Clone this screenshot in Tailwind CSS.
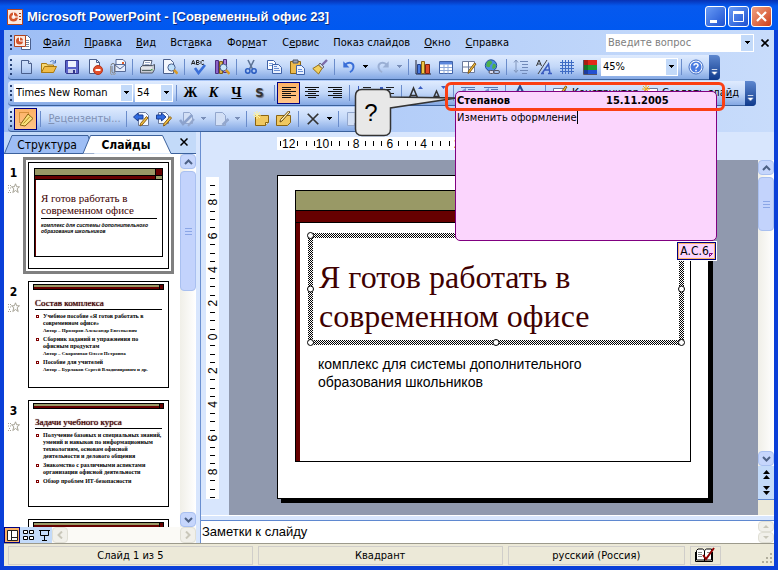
<!DOCTYPE html>
<html lang="ru">
<head>
<meta charset="utf-8">
<title>Microsoft PowerPoint - [Современный офис 23]</title>
<script src="https://cdn.jsdelivr.net/npm/@tailwindcss/browser@4"></script>
</head>
<body class="h-screen overflow-hidden bg-[#d8e6fd] font-['DejaVu_Sans_Condensed','Liberation_Sans',sans-serif] text-[11px] leading-4 text-black">

<svg class="hidden" aria-hidden="true">
  <defs>
    <linearGradient id="gPage" x1="0" y1="0" x2="1" y2="1"><stop offset=".3" stop-color="#fff"/><stop offset="1" stop-color="#c3cfe6"/></linearGradient>
    <linearGradient id="gGold" x1="0" y1="0" x2="1" y2="1"><stop offset="0" stop-color="#fff0a8"/><stop offset="1" stop-color="#dc9a1c"/></linearGradient>
    <symbol id="page" viewBox="0 0 16 16"><path d="M3.500 1.500h7l3 3v10h-10z" fill="url(#gPage)" stroke="#4a5f8c"/><path d="M10.500 1.500v3h3" fill="#dfe8f8" stroke="#4a5f8c"/></symbol>
    <symbol id="open" viewBox="0 0 16 16"><path d="M.5 13.500v-9h5l1 1.500h6v2" fill="#f6d875" stroke="#a9780f"/><path d="M.5 13.500l3-6h12l-3 6z" fill="#f0bc48" stroke="#a9780f"/><path d="M9 3c2-2 4-1.500 5 .500M14.500 1v3h-3" fill="none" stroke="#4a73b8"/></symbol>
    <symbol id="save" viewBox="0 0 16 16"><path d="M1.500 1.500h13v13h-12l-1-1z" fill="#5a62c8" stroke="#32368c"/><path d="M4 2h8v6H4z" fill="#eef2fd"/><path d="M4 10h8v4H4z" fill="#c8cdea"/><path d="M9 11h2v3H9z" fill="#32368c"/></symbol>
    <symbol id="perm" viewBox="0 0 16 16"><path d="M2.500.500h7l3 3v11h-10z" fill="#f4f7fd" stroke="#4a5f8c"/><path d="M9.500.500v3h3" fill="none" stroke="#4a5f8c"/><circle cx="11" cy="11" r="4.500" fill="#e2502c" stroke="#b5331a"/><path d="M8.500 10h5v2h-5z" fill="#fff"/></symbol>
    <symbol id="mail" viewBox="0 0 16 16"><path d="M6 .500h7l2.500 2.500v8H6z" fill="#f4f8ff" stroke="#566a96"/><path d="M4.500 5.500h11v7h-11z" fill="#e6edfb" stroke="#566a96"/><path d="M5 6l5 4 5-4" fill="none" stroke="#566a96"/><path d="M12 3h2v2h-2z" fill="#e2602c"/><path d="M1 6.500a2 2 0 0 1 4 0v6a1.500 1.500 0 0 1-3 0V7" fill="none" stroke="#777"/><path d="M.500 7v6a2.500 2.500 0 0 0 5 1" fill="none" stroke="#999"/></symbol>
    <symbol id="print" viewBox="0 0 16 16"><path d="M5 1.500h8l-1.500 6h-8z" fill="#fff" stroke="#56607a"/><path d="M6 3.500h5M5.500 5.500h5" stroke="#9aa8c6"/><path d="M1.500 8.500l2-2h10l2-1v5l-2 3.500h-12z" fill="#c9ccd4" stroke="#4c5464"/><path d="M2 9h11" stroke="#fff"/><path d="M3 11.500h9" stroke="#566"/><path d="M12 10h1.500v1.500H12z" fill="#50b050"/></symbol>
    <symbol id="preview" viewBox="0 0 16 16"><path d="M1.500.500h7l3 3v11h-10z" fill="#f4f7fd" stroke="#4a5f8c"/><circle cx="9.500" cy="8.500" r="3.600" fill="#bfe0fb" stroke="#4a5f8c"/><path d="M12 11l3.500 3.700" stroke="#d89a28" stroke-width="2.600"/></symbol>
    <symbol id="spell" viewBox="0 0 16 16"><path d="M.500 5.500l1.500-4h.5l1.500 4M1 4.500h2.500M5.500 5.500v-4h2l.5 1-.5 1h-2 2l.8 1-.8 1zM13 2l-1-.500h-1l-1 1v2l1 1h1l1-.500" fill="none" stroke="#222"/><path d="M4 9l3.500 5L14 6" fill="none" stroke="#3a6fd8" stroke-width="2.600"/></symbol>
    <symbol id="books" viewBox="0 0 16 16"><path d="M1.500 1.500h3v13h-3z" fill="#8f62c8" stroke="#4b3080"/><path d="M5.500 2.500h3v12h-3z" fill="#d8b050" stroke="#806018"/><path d="M9.500.500h3v13h-3z" fill="#a882dc" stroke="#4b3080"/><circle cx="9.500" cy="8.500" r="3.400" fill="#c8e6fc" stroke="#4a5f8c"/><path d="M12 11l3.500 4" stroke="#d89a28" stroke-width="2.600"/></symbol>
    <symbol id="cut" viewBox="0 0 16 16"><path d="M5 1l4.500 9M11 1L6.500 10" stroke="#5d7396" stroke-width="1.600"/><circle cx="4.800" cy="12" r="2.200" fill="none" stroke="#2a5cc0" stroke-width="1.500"/><circle cx="11" cy="12" r="2.200" fill="none" stroke="#2a5cc0" stroke-width="1.500"/></symbol>
    <symbol id="copy" viewBox="0 0 16 16"><path d="M1.500 1.500h6l2 2v7h-8z" fill="#fff" stroke="#3f62a8"/><path d="M3 4.500h4M3 6.500h4" stroke="#7fa0dc"/><path d="M6.500 5.500h6l3 3v6h-9z" fill="#eaf1fe" stroke="#3f62a8"/><path d="M8 9.500h5M8 11.500h6M8 7.500h3" stroke="#6a8fd4"/></symbol>
    <symbol id="paste" viewBox="0 0 16 16"><path d="M1.500 2.500h10v12h-10z" fill="#eebb4c" stroke="#8a6412"/><path d="M4 1h5v3H4z" fill="#9aa2b4" stroke="#4c5464"/><path d="M7.500 6.500h5l3 3v6h-8z" fill="#eaf1fe" stroke="#3f62a8"/><path d="M9 10.500h4M9 12.500h5" stroke="#6a8fd4"/></symbol>
    <symbol id="brush" viewBox="0 0 16 16"><path d="M15 1l-5 5" stroke="#7c6ca8" stroke-width="2.400"/><path d="M8 4l4 4-2 1.500L6.500 6z" fill="#d0d4e0" stroke="#667"/><path d="M6.500 6L.800 9.500l5.700 5.500 3.500-5.500z" fill="#f2d060" stroke="#967014"/></symbol>
    <symbol id="undo" viewBox="0 0 16 16"><path d="M4 5c5-4 10-1 9 4-.500 2.500-2 4-4 5" fill="none" stroke="#3a6fd8" stroke-width="2.200"/><path d="M1.500 1.500v7h7z" fill="#3a6fd8"/></symbol>
    <symbol id="redo" viewBox="0 0 16 16"><path d="M12 5c-5-4-10-1-9 4 .500 2.500 2 4 4 5" fill="none" stroke="#9aafd4" stroke-width="2.200"/><path d="M14.500 1.500v7h-7z" fill="#9aafd4"/></symbol>
    <symbol id="chart" viewBox="0 0 16 16"><path d="M1 1v14h15" fill="none" stroke="#223"/><path d="M2.500 5.500h3v9h-3z" fill="#4a7be0" stroke="#223f88"/><path d="M6.500 2.500h3v12h-3z" fill="#f0c848" stroke="#8a6412"/><path d="M10.500 5.500h4v9h-4z" fill="#e04c28" stroke="#802010"/></symbol>
    <symbol id="table" viewBox="0 0 16 16"><path d="M1.500 2.500h13v12h-13z" fill="#fff" stroke="#3f62a8"/><path d="M2 3h12v2.500H2z" fill="#5a86dc"/><path d="M2 8.500h12M2 11.500h12M6 5.500v9M10 5.500v9" stroke="#8fa9d8"/></symbol>
    <symbol id="tborder" viewBox="0 0 16 16"><path d="M1.500 2.500h12v11h-12z" fill="#fff" stroke="#6b7a9c"/><path d="M2 8h12M7.500 3v10" stroke="#6b7a9c"/><path d="M15 5l-6 8-2 1.500.500-2.500 6-8z" fill="#f0c040" stroke="#8a5c12"/></symbol>
    <symbol id="globe" viewBox="0 0 16 16"><circle cx="7" cy="6.500" r="5.700" fill="#4a8ce4" stroke="#22509c"/><path d="M3 3c2-2 4-2 5 0s-2 2-2 4-3 1-4 0zM9 5c2-1 3 1 3 2s-2 3-3 3-1-3 0-5z" fill="#4cb04c"/><rect x="5" y="11.500" width="5" height="3" rx="1.500" fill="#dde" stroke="#556"/><rect x="9.500" y="11.500" width="6" height="3" rx="1.500" fill="none" stroke="#556"/></symbol>
    <symbol id="expand" viewBox="0 0 16 16"><path d="M3 1v12M1 3.500L3 1l2 2.500M1 11l2 2.500L5 11" fill="none" stroke="#8095bb"/><path d="M7 2.500h8M9 5.500h6M9 8.500h6M7 11.500h8M9 14.500h5" stroke="#7089b8"/></symbol>
    <symbol id="aa" viewBox="0 0 16 16"><path d="M.500 7L3 1l2.500 6M1.500 5h3" fill="none" stroke="#333"/><path d="M11 1L2 15" stroke="#444"/><path d="M6 14.500L12.500 5l1.500 9.500M8.500 11h5M5 14.500h3M12 14.500h4" fill="none" stroke="#3a5cc0" stroke-width="1.500"/></symbol>
    <symbol id="grid" viewBox="0 0 16 16"><path d="M1 3.500h14M1 6.500h14M1 9.500h14M1 12.500h14M3.500 1v14M6.500 1v14M9.500 1v14M12.500 1v14" stroke="#3f6cc4"/></symbol>
    <symbol id="color" viewBox="0 0 16 16"><path d="M2 1h13v5H2z" fill="#e02818"/><path d="M2 6h13v5H2z" fill="#1c9c30"/><path d="M2 11h13v4H2z" fill="#2450d0"/><path d="M1.500 1v14.500H15" fill="none" stroke="#556"/><path d="M2 1h4v14H2z" fill="#000" opacity=".25"/></symbol>
    <symbol id="help" viewBox="0 0 16 16"><circle cx="8" cy="8" r="7" fill="#fff" stroke="#3f6cc4"/><circle cx="8" cy="8" r="5.500" fill="#4a7be0"/><path d="M6 6.500c0-2.500 4-2.500 4 0 0 1.500-2 1.500-2 3M8 10.700v1.500" fill="none" stroke="#fff" stroke-width="1.500"/></symbol>
    <symbol id="al" viewBox="0 0 16 16"><path d="M1 2.500h14M1 4.500h9M1 6.500h14M1 8.500h9M1 10.500h14M1 12.500h9" stroke="#111"/></symbol>
    <symbol id="ac" viewBox="0 0 16 16"><path d="M1 2.500h14M4 4.500h8M1 6.500h14M4 8.500h8M1 10.500h14M4 12.500h8" stroke="#111"/></symbol>
    <symbol id="ar" viewBox="0 0 16 16"><path d="M1 2.500h14M6 4.500h9M1 6.500h14M6 8.500h9M1 10.500h14M6 12.500h9" stroke="#111"/></symbol>
    <symbol id="nums" viewBox="0 0 16 16"><path d="M2.500 1v4M2 7.500h2v2H2v2h2" fill="none" stroke="#3a5cc0"/><path d="M7 2.500h8M7 4.500h5M7 8.500h8M7 10.500h5" stroke="#222"/></symbol>
    <symbol id="bul" viewBox="0 0 16 16"><path d="M1 2h3v3H1zM1 8h3v3H1z" fill="#3a5cc0"/><path d="M7 2.500h8M7 4.500h5M7 8.500h8M7 10.500h5" stroke="#222"/></symbol>
    <symbol id="aup" viewBox="0 0 16 16"><path d="M1 14L5.500 3 10 14M3 10.500h5M0 14.500h3.500M7 14.500h5" fill="none" stroke="#333" stroke-width="1.600"/><path d="M10 4l2.500-3L15 4z" fill="#3a5cc0"/></symbol>
    <symbol id="adn" viewBox="0 0 16 16"><path d="M2 14L5.500 6 9 14M3.500 11.500h4M1 14.500h3M7 14.500h4" fill="none" stroke="#333" stroke-width="1.500"/><path d="M10 1l2.500 3L15 1z" fill="#3a5cc0"/></symbol>
    <symbol id="ind" viewBox="0 0 16 16"><path d="M1 2.500h14M8 4.500h7M8 6.500h7M8 8.500h7M1 10.500h14" stroke="#5a77b0"/><path d="M6 3v5L2 5.500z" fill="#7a97d0"/></symbol>
    <symbol id="acol" viewBox="0 0 16 16"><path d="M3 11L8 1l5 10M5 7.500h6" fill="none" stroke="#2c4c90" stroke-width="2"/><path d="M1 13h14v3H1z" fill="#600"/></symbol>
    <symbol id="design" viewBox="0 0 16 16"><path d="M1.500 3.500h12v9h-12z" fill="#fff" stroke="#6b7a9c"/><path d="M15 2l-5 7-2 1 .500-2 5-7z" fill="#f0c040" stroke="#8a5c12"/></symbol>
    <symbol id="nslide" viewBox="0 0 16 16"><path d="M3.500 3.500h12v9h-12z" fill="#fff" stroke="#6b7a9c"/><path d="M4 0v8M0 4h8M1 1l6 6M7 1L1 7" stroke="#f0b020"/></symbol>
    <symbol id="pencil" viewBox="0 0 16 16"><path d="M1.500 1.500h9v10h-9z" fill="none" stroke="#b06a10" stroke-dasharray="1 1"/><path d="M10 3l5 4.500L7 15l-5-1z" fill="#f9e07a" stroke="#8a6412"/><path d="M12 5.500l-6.500 7" stroke="#b98a1c"/></symbol>
    <symbol id="prevc" viewBox="0 0 16 16"><path d="M5.500 1.500h7l3 3v10h-10z" fill="#f4f8ff" stroke="#6b7a9c"/><path d="M.500 6L5 2v2h5v4H5v2z" fill="#2f6ae0" stroke="#1c3f94"/><path d="M15 7l-6 7-2 1 .500-2.500 6-7z" fill="#f0c040" stroke="#8a5c12"/></symbol>
    <symbol id="nextc" viewBox="0 0 16 16"><path d="M2.500 1.500h7l3 3v8h-10z" fill="#f4f8ff" stroke="#6b7a9c"/><path d="M10 6L5.500 2v2H.500v4h5v2z" fill="#2f6ae0" stroke="#1c3f94"/><path d="M15.500 7l-6 7-2 1 .500-2.500 6-7z" fill="#f0c040" stroke="#8a5c12"/></symbol>
    <symbol id="okc" viewBox="0 0 16 16"><path d="M4.500 1.500h6l3 3v8h-9z" fill="#d2dff5" stroke="#93a7cd"/><path d="M1 9l3 4 9-9" fill="none" stroke="#8ca2cc" stroke-width="2.500"/><path d="M15 8l-6 7" stroke="#93a7cd" stroke-width="2"/></symbol>
    <symbol id="noc" viewBox="0 0 16 16"><path d="M2.500 1.500h7l3 3v10h-10z" fill="#d2dff5" stroke="#93a7cd"/><path d="M15.500 8l-6 6" stroke="#93a7cd" stroke-width="2.500"/></symbol>
    <symbol id="newc" viewBox="0 0 16 16"><path d="M2.500 4.500h13v7l-3 3h-10z" fill="#f0c860" stroke="#8a6412"/><path d="M12.500 14.500v-3h3" fill="#fff3c0" stroke="#8a6412"/><path d="M4 0v8M0 4h8M1 1l6 6M7 1L1 7" stroke="#fff3a0"/></symbol>
    <symbol id="editc" viewBox="0 0 16 16"><path d="M.500 4.500h14v7l-3 3h-11z" fill="#f0c860" stroke="#8a6412"/><path d="M14 1L6 10l-2 1 .500-2.500 8-8.500z" fill="#fff0b0" stroke="#6b4a10"/></symbol>
    <symbol id="del" viewBox="0 0 16 16"><path d="M2 2l12 12M14 2L2 14" stroke="#333" stroke-width="2"/></symbol>
    <symbol id="dd" viewBox="0 0 7 4"><path d="M1 0h5v1H1zM2 1h3v1H2zM3 2h1v1H3z" fill="currentColor"/></symbol>
    <symbol id="ppt" viewBox="0 0 16 16"><path d="M.500.500h15v15H.500z" fill="#fbe9e0" stroke="#b5431c"/><circle cx="6.500" cy="8" r="4.500" fill="#d2552c"/><circle cx="6.500" cy="8" r="2" fill="#fbe9e0"/><path d="M6.500 8V3.500M6.500 8h4.500" stroke="#fff"/><path d="M12 4.500h2M12 7.500h2M12 10.500h2" stroke="#a03818"/></symbol>
    <symbol id="up" viewBox="0 0 9 6"><path d="M1 5l3.500-3.500L8 5" fill="none" stroke="currentColor" stroke-width="2"/></symbol>
    <symbol id="dn" viewBox="0 0 9 6"><path d="M1 1l3.500 3.500L8 1" fill="none" stroke="currentColor" stroke-width="2"/></symbol>
    <symbol id="star" viewBox="0 0 12 11"><path d="M7.500.800l1.200 3h2.800L9.200 5.800l1 3.700-2.700-2-2.700 2 1-3.700L3.500 3.800h2.800z" fill="none" stroke="#a5a294"/><path d="M0 2.500h4M0 5h4M1 7.500h2M0 9.500h3" stroke="#a5a294" stroke-dasharray="1 1"/></symbol>
    <symbol id="cap" viewBox="0 0 12 25"><path d="M3 14h6v1H3zM3 17h6v1H3zM4 18h4v1H4zM5 19h2v1H5z" fill="#fff"/></symbol>
  </defs>
</svg>

<div class="relative flex h-full flex-col border-x-4 border-b-4 border-[#0a3fd8]">

  <!-- Title bar -->
  <header class="-mx-1 flex h-[30px] shrink-0 items-center gap-1 bg-linear-to-b from-[#0831b4] via-[#0659ee] via-20% to-[#0058f0] pt-[3px] pr-1.5 pl-[7px]">
    <svg class="size-4"><use href="#ppt"/></svg>
    <h1 class="flex-1 truncate font-['Liberation_Sans',sans-serif] text-[13px] font-bold text-white [text-shadow:1px_1px_0_#0a2a80]">Microsoft PowerPoint - [Современный офис 23]</h1>
    <div class="flex gap-0.5">
      <button aria-label="Свернуть" class="size-[21px] rounded-[3px] border border-white bg-linear-to-br from-[#6a9bf5] to-[#1d4fd0]"><svg viewBox="0 0 19 19"><path d="M4 13h7v3H4z" fill="#fff"/></svg></button>
      <button aria-label="Развернуть" class="size-[21px] rounded-[3px] border border-white bg-linear-to-br from-[#6a9bf5] to-[#1d4fd0]"><svg viewBox="0 0 19 19"><path d="M4.500 5v9.500h10V5" fill="none" stroke="#fff"/><path d="M4 4h11v3H4z" fill="#fff"/></svg></button>
      <button aria-label="Закрыть" class="size-[21px] rounded-[3px] border border-white bg-linear-to-br from-[#f0a080] to-[#cc3c14]"><svg viewBox="0 0 19 19"><path d="M5 5l9 9M14 5l-9 9" stroke="#fff" stroke-width="2.200"/></svg></button>
    </div>
  </header>

  <!-- Menu and toolbars -->
  <div class="shrink-0 bg-linear-to-r from-[#9ebef5] to-[#c8dcfb]">
    <nav class="flex h-[25px] items-center pl-1.5">
      <span class="flex h-4 w-0.5 flex-col justify-between"><i class="size-0.5 bg-[#274176]"></i><i class="size-0.5 bg-[#274176]"></i><i class="size-0.5 bg-[#274176]"></i><i class="size-0.5 bg-[#274176]"></i></span>
      <svg class="ml-0.5 h-[17px] w-[18px]" viewBox="0 0 18 17"><path d="M7.500 1.500h6l3 3v11h-9z" fill="#fff" stroke="#4a5f8c"/><path d="M12 6.500h3M12 8.500h3M12 10.500h3M12 12.500h3" stroke="#789"/><path d="M.500 1.500h11v11H.500z" fill="#fbe9e0" stroke="#b5431c"/><circle cx="5.500" cy="7" r="3.500" fill="#d2552c"/><path d="M5.500 7V3M5.500 7h4" stroke="#fff"/></svg>
      <div class="ml-1 flex whitespace-nowrap">
        <button class="px-[7px]"><u>Ф</u>айл</button>
        <button class="px-[7px]"><u>П</u>равка</button>
        <button class="px-[7px]"><u>В</u>ид</button>
        <button class="px-[7px]">Вст<u>а</u>вка</button>
        <button class="px-2">Фор<u>м</u>ат</button>
        <button class="px-[7px]">С<u>е</u>рвис</button>
        <button class="px-[7px]">Показ слай<u>д</u>ов</button>
        <button class="px-[7px]"><u>О</u>кно</button>
        <button class="px-2"><u>С</u>правка</button>
      </div>
      <div class="ml-auto flex h-[18px] w-[148px] items-center bg-white">
        <input aria-label="Вопрос" placeholder="Введите вопрос" class="min-w-0 flex-1 pl-0.5 placeholder:text-[#808080]">
        <button aria-label="Список вопросов" class="m-px flex w-3 items-center justify-center self-stretch bg-[#c3daf9]"><svg class="h-1 w-[7px]"><use href="#dd"/></svg></button>
      </div>
      <button aria-label="Закрыть окно" class="mr-1 ml-1.5 p-px"><svg class="size-2" viewBox="0 0 8 8"><path d="M.500.500l7 7M7.500.500l-7 7" stroke="#000" stroke-width="1.600"/></svg></button>
    </nav>

    <div class="flex h-[26px] pl-1" role="toolbar" aria-label="Стандартная">
      <div class="flex h-[25px] items-center rounded-sm border-b border-[#3b619c] bg-linear-to-b from-[#dfebfe] via-[#c2d7f8] to-[#84a8e4]">
        <span class="mx-[2px] flex h-4 w-0.5 flex-col justify-between"><i class="size-0.5 bg-[#274176]"></i><i class="size-0.5 bg-[#274176]"></i><i class="size-0.5 bg-[#274176]"></i><i class="size-0.5 bg-[#274176]"></i></span>
        <button aria-label="Создать" class="flex w-[23px] justify-center"><svg class="size-4"><use href="#page"/></svg></button>
        <button aria-label="Открыть" class="flex w-[23px] justify-center"><svg class="size-4"><use href="#open"/></svg></button>
        <button aria-label="Сохранить" class="flex w-[23px] justify-center"><svg class="size-4"><use href="#save"/></svg></button>
        <button aria-label="Разрешения" class="flex w-[23px] justify-center"><svg class="size-4"><use href="#perm"/></svg></button>
        <button aria-label="Сообщение" class="flex w-[23px] justify-center"><svg class="size-4"><use href="#mail"/></svg></button>
        <i class="mr-0.5 ml-[3px] h-4 w-px bg-[#6a8ccb]"></i>
        <button aria-label="Печать" class="flex w-[23px] justify-center"><svg class="size-4"><use href="#print"/></svg></button>
        <button aria-label="Просмотр" class="flex w-[23px] justify-center"><svg class="size-4"><use href="#preview"/></svg></button>
        <i class="mr-0.5 ml-[3px] h-4 w-px bg-[#6a8ccb]"></i>
        <button aria-label="Орфография" class="flex w-[23px] justify-center"><svg class="size-4"><use href="#spell"/></svg></button>
        <button aria-label="Справочники" class="flex w-[23px] justify-center"><svg class="size-4"><use href="#books"/></svg></button>
        <i class="mr-0.5 ml-[3px] h-4 w-px bg-[#6a8ccb]"></i>
        <button aria-label="Вырезать" class="flex w-[23px] justify-center"><svg class="size-4"><use href="#cut"/></svg></button>
        <button aria-label="Копировать" class="flex w-[23px] justify-center"><svg class="size-4"><use href="#copy"/></svg></button>
        <button aria-label="Вставить" class="flex w-[23px] justify-center"><svg class="size-4"><use href="#paste"/></svg></button>
        <button aria-label="Формат по образцу" class="flex w-[23px] justify-center"><svg class="size-4"><use href="#brush"/></svg></button>
        <i class="mr-0.5 ml-[3px] h-4 w-px bg-[#6a8ccb]"></i>
        <button aria-label="Отменить" class="flex w-[23px] justify-center"><svg class="size-3.5"><use href="#undo"/></svg></button>
        <button aria-label="Список отмены" class="flex w-[11px] justify-center"><svg class="h-1 w-[7px]"><use href="#dd"/></svg></button>
        <button aria-label="Вернуть" class="flex w-[23px] justify-center"><svg class="size-3.5"><use href="#redo"/></svg></button>
        <button aria-label="Список возврата" class="flex w-[11px] justify-center text-[#7a8fb8]"><svg class="h-1 w-[7px]"><use href="#dd"/></svg></button>
        <i class="mr-0.5 ml-[3px] h-4 w-px bg-[#6a8ccb]"></i>
        <button aria-label="Диаграмма" class="flex w-[23px] justify-center"><svg class="size-4"><use href="#chart"/></svg></button>
        <button aria-label="Таблица" class="flex w-[23px] justify-center"><svg class="size-4"><use href="#table"/></svg></button>
        <button aria-label="Границы" class="flex w-[23px] justify-center"><svg class="size-4"><use href="#tborder"/></svg></button>
        <button aria-label="Гиперссылка" class="flex w-[23px] justify-center"><svg class="size-4"><use href="#globe"/></svg></button>
        <i class="mr-0.5 ml-[3px] h-4 w-px bg-[#6a8ccb]"></i>
        <button aria-label="Развернуть все" class="flex w-[23px] justify-center"><svg class="size-4"><use href="#expand"/></svg></button>
        <button aria-label="Показать форматирование" class="flex w-[23px] justify-center"><svg class="size-4"><use href="#aa"/></svg></button>
        <button aria-label="Сетка" class="flex w-[23px] justify-center"><svg class="size-4"><use href="#grid"/></svg></button>
        <button aria-label="Цвет" class="flex w-[23px] justify-center"><svg class="size-4"><use href="#color"/></svg></button>
        <div class="relative h-[18px] w-[77px] bg-white">
          <select aria-label="Масштаб" class="h-full w-full appearance-none pl-0.5"><option>45%</option></select>
          <span class="pointer-events-none absolute inset-y-px right-px flex w-[11px] items-center justify-center bg-[#c3daf9]"><svg class="h-1 w-[7px]"><use href="#dd"/></svg></span>
        </div>
        <i class="mr-0.5 ml-[3px] h-4 w-px bg-[#6a8ccb]"></i>
        <button aria-label="Справка" class="flex w-[23px] justify-center"><svg class="size-4"><use href="#help"/></svg></button>
        <button aria-label="Параметры панели" class="ml-0.5 h-[25px] w-[11px] rounded-r-sm bg-linear-to-b from-[#5d87cf] to-[#0f3a8c]"><svg class="h-[25px] w-[11px]"><use href="#cap"/></svg></button>
      </div>
    </div>

    <div class="flex h-[26px] pl-1" role="toolbar" aria-label="Форматирование">
      <div class="flex h-[25px] items-center rounded-sm border-b border-[#3b619c] bg-linear-to-b from-[#dfebfe] via-[#c2d7f8] to-[#84a8e4]">
        <span class="mx-[2px] flex h-4 w-0.5 flex-col justify-between"><i class="size-0.5 bg-[#274176]"></i><i class="size-0.5 bg-[#274176]"></i><i class="size-0.5 bg-[#274176]"></i><i class="size-0.5 bg-[#274176]"></i></span>
        <div class="relative h-[18px] w-[119px] bg-white">
          <select aria-label="Шрифт" class="h-full w-full appearance-none pl-0.5"><option>Times New Roman</option></select>
          <span class="pointer-events-none absolute inset-y-px right-px flex w-[11px] items-center justify-center bg-[#c3daf9]"><svg class="h-1 w-[7px]"><use href="#dd"/></svg></span>
        </div>
        <div class="relative ml-0.5 h-[18px] w-[38px] bg-white">
          <select aria-label="Размер шрифта" class="h-full w-full appearance-none pl-0.5"><option>54</option></select>
          <span class="pointer-events-none absolute inset-y-px right-px flex w-[11px] items-center justify-center bg-[#c3daf9]"><svg class="h-1 w-[7px]"><use href="#dd"/></svg></span>
        </div>
        <i class="mr-0.5 ml-[3px] h-4 w-px bg-[#6a8ccb]"></i>
        <button class="w-[23px] font-['Liberation_Serif',serif] text-[14px] font-bold">Ж</button>
        <button class="w-[23px] font-['Liberation_Serif',serif] text-[14px] font-bold italic">К</button>
        <button class="w-[23px] font-['Liberation_Serif',serif] text-[14px] font-bold underline">Ч</button>
        <button class="w-[23px] text-[13px] font-bold text-[#333] [text-shadow:1px_1px_1px_#667]">S</button>
        <i class="mr-0.5 ml-[3px] h-4 w-px bg-[#6a8ccb]"></i>
        <button aria-label="По левому краю" aria-pressed="true" class="flex h-[22px] w-[23px] items-center justify-center border border-[#000080] bg-linear-to-b from-[#fdb265] to-[#ffc488]"><svg class="size-4"><use href="#al"/></svg></button>
        <button aria-label="По центру" class="flex w-[23px] justify-center"><svg class="size-4"><use href="#ac"/></svg></button>
        <button aria-label="По правому краю" class="flex w-[23px] justify-center"><svg class="size-4"><use href="#ar"/></svg></button>
        <i class="mr-0.5 ml-[3px] h-4 w-px bg-[#6a8ccb]"></i>
        <button aria-label="Нумерация" class="flex w-[23px] justify-center"><svg class="size-4"><use href="#nums"/></svg></button>
        <button aria-label="Маркеры" class="flex w-[23px] justify-center"><svg class="size-4"><use href="#bul"/></svg></button>
        <i class="mr-0.5 ml-[3px] h-4 w-px bg-[#6a8ccb]"></i>
        <button aria-label="Увеличить размер" class="flex w-[23px] justify-center"><svg class="size-4"><use href="#aup"/></svg></button>
        <button aria-label="Уменьшить размер" class="flex w-[23px] justify-center"><svg class="size-4"><use href="#adn"/></svg></button>
        <i class="mr-0.5 ml-[3px] h-4 w-px bg-[#6a8ccb]"></i>
        <button aria-label="Уменьшить отступ" class="flex w-[23px] justify-center"><svg class="size-4"><use href="#ind"/></svg></button>
        <button aria-label="Увеличить отступ" class="flex w-[23px] justify-center"><svg class="size-4"><use href="#ind"/></svg></button>
        <i class="mr-0.5 ml-[3px] h-4 w-px bg-[#6a8ccb]"></i>
        <button aria-label="Цвет шрифта" class="flex w-[23px] justify-center"><svg class="size-4"><use href="#acol"/></svg></button>
        <button aria-label="Список цветов" class="flex w-[11px] justify-center"><svg class="h-1 w-[7px]"><use href="#dd"/></svg></button>
        <i class="mr-0.5 ml-[3px] h-4 w-px bg-[#6a8ccb]"></i>
        <button class="flex w-[90px] items-center gap-1 overflow-hidden whitespace-nowrap pl-1"><svg class="size-4 shrink-0"><use href="#design"/></svg><span><u>К</u>онструктор</span></button>
        <button class="flex w-[101px] items-center justify-between whitespace-nowrap pl-1"><svg class="size-4 shrink-0"><use href="#nslide"/></svg><span>Создать сла<u>й</u>д</span></button>
        <button aria-label="Параметры панели" class="ml-1.5 h-[25px] w-[11px] rounded-r-sm bg-linear-to-b from-[#5d87cf] to-[#0f3a8c]"><svg class="h-[25px] w-[11px]"><use href="#cap"/></svg></button>
      </div>
    </div>

    <div class="flex h-[25px] pl-1" role="toolbar" aria-label="Рецензирование">
      <div class="flex h-[25px] items-center rounded-sm border-b border-[#3b619c] bg-linear-to-b from-[#dfebfe] via-[#c2d7f8] to-[#84a8e4]">
        <span class="mx-[2px] flex h-4 w-0.5 flex-col justify-between"><i class="size-0.5 bg-[#274176]"></i><i class="size-0.5 bg-[#274176]"></i><i class="size-0.5 bg-[#274176]"></i><i class="size-0.5 bg-[#274176]"></i></span>
        <button aria-label="Показать исправления" aria-pressed="true" class="flex h-[22px] w-[23px] items-center justify-center border border-[#000080] bg-linear-to-b from-[#fdb265] to-[#ffc488]"><svg class="size-4"><use href="#pencil"/></svg></button>
        <i class="mr-0.5 ml-[3px] h-4 w-px bg-[#6a8ccb]"></i>
        <button disabled class="w-[83px] whitespace-nowrap text-[#8091b4]"><u>Р</u>ецензенты...</button>
        <i class="mr-0.5 h-4 w-px bg-[#6a8ccb]"></i>
        <button aria-label="Предыдущее примечание" class="flex w-[23px] justify-center"><svg class="size-4"><use href="#prevc"/></svg></button>
        <button aria-label="Следующее примечание" class="flex w-[23px] justify-center"><svg class="size-4"><use href="#nextc"/></svg></button>
        <button aria-label="Применить" class="flex w-[23px] justify-center"><svg class="size-4"><use href="#okc"/></svg></button>
        <button aria-label="Список применения" class="flex w-[11px] justify-center text-[#7a8fb8]"><svg class="h-1 w-[7px]"><use href="#dd"/></svg></button>
        <button aria-label="Отклонить" class="flex w-[23px] justify-center"><svg class="size-4"><use href="#noc"/></svg></button>
        <button aria-label="Список отклонения" class="flex w-[11px] justify-center text-[#7a8fb8]"><svg class="h-1 w-[7px]"><use href="#dd"/></svg></button>
        <i class="mr-0.5 ml-[3px] h-4 w-px bg-[#6a8ccb]"></i>
        <button aria-label="Вставить примечание" class="flex w-[23px] justify-center"><svg class="size-4"><use href="#newc"/></svg></button>
        <button aria-label="Изменить примечание" class="flex w-[23px] justify-center"><svg class="size-4"><use href="#editc"/></svg></button>
        <i class="mr-0.5 ml-[3px] h-4 w-px bg-[#6a8ccb]"></i>
        <button aria-label="Удалить примечание" class="flex w-[23px] justify-center"><svg class="size-3.5"><use href="#del"/></svg></button>
        <button aria-label="Список удаления" class="flex w-[11px] justify-center"><svg class="h-1 w-[7px]"><use href="#dd"/></svg></button>
        <i class="mr-0.5 ml-[3px] h-4 w-px bg-[#6a8ccb]"></i>
        <button aria-label="Область исправлений" class="flex w-[23px] justify-center"><svg class="size-4"><use href="#noc"/></svg></button>
        <span class="w-5"></span>
      </div>
    </div>
  </div>

  <!-- Work area -->
  <div class="flex min-h-0 flex-1">

    <aside class="flex w-48 shrink-0 flex-col">
      <div class="relative flex h-[22px] shrink-0 items-end bg-[#c3daf9]">
        <svg class="absolute inset-x-0 bottom-0 h-[19px] w-48" viewBox="0 0 192 19"><path d="M.500 18.500L8 .500h76L90 18.500z" fill="#9ebef5" stroke="#3b619c"/><path d="M0 18.500h79L86.500.500h72L167 18.500h25" fill="#fff" stroke="#3b619c"/></svg>
        <button class="relative w-[86px] text-[12px] leading-[18px]">Структура</button>
        <button class="relative w-[72px] text-[12px] leading-[18px] font-bold">Слайды</button>
        <button aria-label="Закрыть область" class="relative ml-auto p-2"><svg class="size-2" viewBox="0 0 8 8"><path d="M.500.500l7 7M7.500.500l-7 7" stroke="#000" stroke-width="1.500"/></svg></button>
      </div>

      <div class="flex min-h-0 flex-1 bg-white">
        <ol class="flex min-w-0 flex-1 flex-col gap-0.5 overflow-hidden pt-[3px]">
          <li class="flex shrink-0">
            <div class="flex w-[19px] flex-col items-center gap-0.5 pt-2"><b class="text-[12px]">1</b><svg class="h-[11px] w-3"><use href="#star"/></svg></div>
            <div class="border-[3px] border-[#808080] p-0.5">
              <div class="h-[107px] w-[141px] border border-black p-[5px]">
                <div class="flex h-[89px] flex-col border border-black">
                  <div class="flex h-1.5 shrink-0"><i class="flex-1 bg-[#999966]"></i><i class="w-[7px] border-l border-black bg-[#660000]"></i></div>
                  <div class="flex h-[5px] shrink-0 border-y border-black"><i class="flex-1 bg-[#660000]"></i><i class="w-[7px] border-l border-black bg-[#999966]"></i></div>
                  <div class="flex-1 border-l border-[#660000] px-[5px] pt-3">
                    <div class="border-b border-black pb-0.5 font-['Liberation_Serif',serif] text-[11px] leading-3 text-[#400000]">Я готов работать в<br>современном офисе</div>
                    <div class="whitespace-nowrap pt-[3px] font-['Liberation_Sans',sans-serif] text-[5px] leading-[6px] font-bold italic">комплекс для системы дополнительного<br>образования школьников</div>
                  </div>
                </div>
              </div>
            </div>
          </li>
          <li class="flex shrink-0">
            <div class="flex w-[19px] flex-col items-center gap-0.5 pt-2"><b class="text-[12px]">2</b><svg class="h-[11px] w-3"><use href="#star"/></svg></div>
            <div class="border-[3px] border-transparent p-0.5">
              <div class="h-[107px] w-[141px] overflow-hidden border border-black px-1 pt-0.5">
                <div class="flex h-1.5 border border-black bg-[#660000]"><i class="h-0.5 flex-1 bg-[#999966]"></i><i class="w-1 border-l border-black"></i></div>
                <div class="mx-0.5 border-b border-black pt-2 font-['Liberation_Serif',serif] text-[9px] leading-[11px] text-[#400000] [text-shadow:0_0_1px_#400000]">Состав комплекса</div>
                <ul class="mt-[3px] ml-[3px] flex flex-col gap-[2px] font-['Liberation_Serif',serif] text-[6px] leading-[7px] font-bold">
                  <li class="flex gap-1"><i class="mt-0.5 size-[3px] border border-[#800000]"></i><span>Учебное пособие «Я готов работать в<br>современном офисе»<br><span class="text-[5px]">Автор – Прозоров Александр Евгеньевич</span></span></li>
                  <li class="flex gap-1"><i class="mt-0.5 size-[3px] border border-[#800000]"></i><span>Сборник заданий и упражнения по<br>офисным продуктам<br><span class="text-[5px]">Автор – Скоромная Олеся Петровна</span></span></li>
                  <li class="flex gap-1"><i class="mt-0.5 size-[3px] border border-[#800000]"></i><span>Пособие для учителей<br><span class="text-[5px]">Автор – Бурлаков Сергей Владимирович и др.</span></span></li>
                </ul>
              </div>
            </div>
          </li>
          <li class="flex shrink-0">
            <div class="flex w-[19px] flex-col items-center gap-0.5 pt-2"><b class="text-[12px]">3</b><svg class="h-[11px] w-3"><use href="#star"/></svg></div>
            <div class="border-[3px] border-transparent p-0.5">
              <div class="h-[107px] w-[141px] overflow-hidden border border-black px-1 pt-0.5">
                <div class="flex h-1.5 border border-black bg-[#660000]"><i class="h-0.5 flex-1 bg-[#999966]"></i><i class="w-1 border-l border-black"></i></div>
                <div class="mx-0.5 border-b border-black pt-2 font-['Liberation_Serif',serif] text-[9px] leading-[11px] text-[#400000] [text-shadow:0_0_1px_#400000]">Задачи учебного курса</div>
                <ul class="mt-[3px] ml-[3px] flex flex-col gap-[2px] font-['Liberation_Serif',serif] text-[6px] leading-[7px] font-bold">
                  <li class="flex gap-1"><i class="mt-0.5 size-[3px] border border-[#800000]"></i><span>Получение базовых и специальных знаний,<br>умений и навыков по информационным<br>технологиям, основам офисной<br>деятельности и делового общения</span></li>
                  <li class="flex gap-1"><i class="mt-0.5 size-[3px] border border-[#800000]"></i><span>Знакомство с различными аспектами<br>организации офисной деятельности</span></li>
                  <li class="flex gap-1"><i class="mt-0.5 size-[3px] border border-[#800000]"></i><span>Обзор проблем ИТ-безопасности</span></li>
                </ul>
              </div>
            </div>
          </li>
          <li class="flex shrink-0">
            <div class="w-[19px]"></div>
            <div class="border-[3px] border-transparent p-0.5">
              <div class="h-[107px] w-[141px] border border-black px-1 pt-0.5">
                <div class="flex h-1.5 border border-black bg-[#660000]"><i class="h-0.5 flex-1 bg-[#999966]"></i><i class="w-1 border-l border-black"></i></div>
              </div>
            </div>
          </li>
        </ol>
        <div class="flex w-4 flex-col gap-0.5 bg-linear-to-r from-[#f0efe8] to-white">
          <button aria-label="Вверх" class="flex h-[15px] items-center justify-center rounded-sm border border-[#a9c0f0] bg-[#c6d6fc] text-[#4d6185]"><svg class="h-1.5 w-[9px]"><use href="#up"/></svg></button>
          <div class="flex h-30 flex-col items-center justify-center gap-px rounded-sm border border-[#a9c0f0] bg-[#c3d3fc]"><i class="h-px w-[7px] bg-[#8ba6e6]"></i><i class="mt-px h-px w-[7px] bg-[#8ba6e6]"></i><i class="mt-px h-px w-[7px] bg-[#8ba6e6]"></i></div>
          <button aria-label="Вниз" class="mt-auto flex h-[15px] items-center justify-center rounded-sm border border-[#a9c0f0] bg-[#c6d6fc] text-[#4d6185]"><svg class="h-1.5 w-[9px]"><use href="#dn"/></svg></button>
        </div>
      </div>

      <div class="flex h-4 shrink-0 bg-[#c3daf9]">
        <button aria-label="Обычный режим" aria-pressed="true" class="flex w-4 items-center justify-center border border-[#000080] bg-[#fdb265]"><svg class="size-[11px]" viewBox="0 0 11 11"><path d="M.500.500h10v10H.500zM4.500.500v10M4.500 7.500h6" fill="#fff" stroke="#222"/></svg></button>
        <button aria-label="Сортировщик" class="flex w-4 items-center justify-center"><svg class="size-[11px]" viewBox="0 0 11 11"><path d="M.500.500h4v3h-4zM6.500.500h4v3h-4zM.500 6.500h4v3h-4zM6.500 6.500h4v3h-4z" fill="#fff" stroke="#000"/></svg></button>
        <button aria-label="Показ слайдов" class="flex w-4 items-center justify-center"><svg class="size-[11px]" viewBox="0 0 11 11"><path d="M0 .500h11M1.500 1v4.500h8V1M5.500 6v4M3 10.500h5" fill="none" stroke="#000"/></svg></button>
        <div class="flex flex-1 justify-between bg-[#fbfaf6]">
          <button disabled aria-label="Влево" class="flex w-4 items-center justify-center rounded-sm border border-[#e0dfd5] bg-[#f1f0ea]"><svg class="h-2 w-1.5" viewBox="0 0 6 8"><path d="M5 .500L1.500 4 5 7.500" fill="none" stroke="#c9c7ba" stroke-width="2"/></svg></button>
          <button disabled aria-label="Вправо" class="flex w-4 items-center justify-center rounded-sm border border-[#e0dfd5] bg-[#f1f0ea]"><svg class="h-2 w-1.5" viewBox="0 0 6 8"><path d="M1 .500L4.500 4 1 7.500" fill="none" stroke="#c9c7ba" stroke-width="2"/></svg></button>
        </div>
      </div>
    </aside>

    <main class="ml-1 flex min-w-0 flex-1 flex-col border-l border-[#6a8fd0]">
      <div class="flex min-h-0 flex-1">
        <div class="w-7 shrink-0 pt-[45px] pl-[5px]">
          <svg id="vruler" class="h-[322px] w-[13px] bg-white font-['Liberation_Sans',sans-serif] text-[12px]"></svg>
        </div>
        <div class="flex min-w-0 flex-1 flex-col">
          <div class="h-7 shrink-0 pt-[5px] pr-16 pl-12"><svg id="hruler" class="h-[13px] w-full bg-white font-['Liberation_Sans',sans-serif] text-[12px]"></svg></div>
          <div class="flex min-h-0 flex-1">
            <div class="min-w-0 flex-1 bg-[#9099ae] pt-[15px] pr-[49px] pb-4 pl-12">
              <section class="relative h-full border border-black bg-white px-[17px] pt-3.5 pb-9 shadow-[4px_4px_0_#000]">
                <div class="flex h-full flex-col border border-black">
                  <div class="h-5 shrink-0 border-b border-black bg-[#999966]"></div>
                  <div class="h-3 shrink-0 border-b border-black bg-[#660000]"></div>
                  <div class="flex-1 border-l-4 border-[#660000] pt-2.5 pr-1.5 pl-2">
                    <div class="relative bg-[conic-gradient(#000_25%,#fff_0_50%,#000_0_75%,#fff_0)] bg-[length:2px_2px] p-[5px]">
                      <h2 class="bg-white pt-5 pb-1 pl-1.5 font-['Liberation_Serif',serif] text-[32px] leading-[39px] text-[#400000]">Я готов работать в<br>современном офисе</h2>
                      <i class="absolute -top-px -left-px size-[7px] rounded-full border border-black bg-white"></i>
                      <i class="absolute top-1/2 -left-px size-[7px] -translate-y-1/2 rounded-full border border-black bg-white"></i>
                      <i class="absolute -bottom-px -left-px size-[7px] rounded-full border border-black bg-white"></i>
                      <i class="absolute -bottom-px left-1/2 size-[7px] -translate-x-1/2 rounded-full border border-black bg-white"></i>
                      <i class="absolute top-1/2 -right-px size-[7px] -translate-y-1/2 rounded-full border border-black bg-white"></i>
                      <i class="absolute -right-px -bottom-px size-[7px] rounded-full border border-black bg-white"></i>
                    </div>
                    <p class="pt-2.5 pl-2.5 font-['Liberation_Sans',sans-serif] text-[14px] leading-[18px]">комплекс для системы дополнительного<br>образования школьников</p>
                  </div>
                </div>
              </section>
            </div>
            <div class="flex w-4 shrink-0 flex-col bg-linear-to-r from-[#f0efe8] to-white">
              <button aria-label="Вверх" class="flex h-[15px] items-center justify-center rounded-sm border border-[#a9c0f0] bg-[#c6d6fc] text-[#4d6185]"><svg class="h-1.5 w-[9px]"><use href="#up"/></svg></button>
              <div class="mt-0.5 flex h-[54px] flex-col items-center justify-center gap-px rounded-sm border border-[#a9c0f0] bg-[#c3d3fc]"><i class="h-px w-[7px] bg-[#8ba6e6]"></i><i class="mt-px h-px w-[7px] bg-[#8ba6e6]"></i><i class="mt-px h-px w-[7px] bg-[#8ba6e6]"></i></div>
              <button aria-label="Вниз" class="mt-auto flex h-[15px] items-center justify-center rounded-sm border border-[#a9c0f0] bg-[#c6d6fc] text-[#4d6185]"><svg class="h-1.5 w-[9px]"><use href="#dn"/></svg></button>
              <div class="flex h-[34px] flex-col items-center justify-around border-b border-[#5f88d0] bg-[#c3daf9]">
                <button aria-label="Предыдущий слайд"><svg class="h-[9px] w-[7px]" viewBox="0 0 7 9"><path d="M3.500 0L7 4H0zM3.500 5L7 9H0z"/></svg></button>
                <button aria-label="Следующий слайд"><svg class="h-[9px] w-[7px]" viewBox="0 0 7 9"><path d="M3.500 4L7 0H0zM3.500 9L7 5H0z"/></svg></button>
              </div>
              <div class="h-[15px] bg-[#ece9d8]"></div>
            </div>
          </div>
        </div>
      </div>
      <div class="h-1.5 shrink-0 border-t border-b border-t-white border-b-[#5f88d0] bg-[#d8e6fd]"></div>
      <div class="flex h-[22px] shrink-0 bg-white">
        <input aria-label="Заметки" value="Заметки к слайду" class="min-w-0 flex-1 pl-px font-['Liberation_Sans',sans-serif] text-[13px]">
        <div class="flex w-4 flex-col">
          <button disabled aria-label="Заметки вверх" class="flex flex-1 items-center justify-center rounded-sm border border-[#e0dfd5] bg-[#f1f0ea]"><svg class="h-[3px] w-1.5" viewBox="0 0 6 3"><path d="M3 0l3 3H0z" fill="#c9c7ba"/></svg></button>
          <button disabled aria-label="Заметки вниз" class="flex flex-1 items-center justify-center rounded-sm border border-[#e0dfd5] bg-[#f1f0ea]"><svg class="h-[3px] w-1.5" viewBox="0 0 6 3"><path d="M3 3l3-3H0z" fill="#c9c7ba"/></svg></button>
        </div>
      </div>
    </main>
  </div>

  <!-- Status bar -->
  <footer class="flex h-[23px] shrink-0 gap-[5px] border-t border-[#9c9a8c] bg-[#ece9d8] pt-0.5 pb-px pl-1 text-center leading-[18px]">
    <div class="flex-[245] border border-[#d0ceca]">Слайд 1 из 5</div>
    <div class="flex-[245] border border-[#d0ceca]">Квадрант</div>
    <div class="flex-[177] border border-[#d0ceca]">русский (Россия)</div>
    <div class="w-[31px] border border-[#d0ceca] pl-1"><svg class="h-4 w-5" viewBox="0 0 20 16"><path d="M1.500 3.500L3 2h4.500L9.500 3.500 11.500 2h5v11h-15z" fill="#fff" stroke="#000"/><path d="M.500 5v9.500h17V5M9.500 4v10" fill="none" stroke="#000"/><path d="M3 5.500h4M3 7.500h4M3 9.500h4M12 5.500h3" stroke="#888"/><path d="M8 8l3 4 8-11" fill="none" stroke="#900000" stroke-width="2"/></svg></div>
    <div class="flex w-12 items-end justify-end"><svg class="size-3" viewBox="0 0 12 12"><path d="M8 0h2v2H8zM4 4h2v2H4zM8 4h2v2H8zM0 8h2v2H0zM4 8h2v2H4zM8 8h2v2H8z" fill="#b0ad9c"/></svg></div>
  </footer>

  <!-- Comment marker and note -->
  <button class="absolute top-[242px] left-[673px] flex h-[18px] w-[39px] items-center justify-center border border-[#000080] bg-[#fbd5fd] text-[12px] shadow-[0_0_0_1px_#fff,inset_0_0_0_1px_#fdb265]">А.С.6<svg class="mb-0.5 size-1 self-end" viewBox="0 0 4 4"><path d="M.500.500h3L.500 3.500z" fill="none" stroke="#800080"/></svg></button>

  <svg class="absolute top-[88px] left-[347px] h-[50px] w-[106px]" viewBox="0 0 106 50"><path d="M11 1.500h22c4 0 6.500 2.500 6.500 6.500v1l66 1-66 10v21c0 4-2.500 6.500-6.500 6.500H11c-4 0-6.500-2.500-6.500-6.500V8c0-4 2.500-6.500 6.500-6.500z" fill="#e8e8e8" stroke="#333" stroke-width="1.500"/></svg>
  <div class="absolute top-[101px] left-[348px] w-[38px] text-center font-['Liberation_Sans',sans-serif] text-[24px] leading-6">?</div>

  <article class="absolute top-[91px] left-[451px] flex h-[150px] w-[262px] flex-col rounded-[5px] border border-[#800080] bg-[#fbd5fd]">
    <header class="flex h-[18px] items-center font-bold"><span class="w-[150px] pl-px">Степанов</span><time datetime="2005-11-15">15.11.2005</time></header>
    <div role="textbox" aria-label="Текст примечания" contenteditable="true" class="flex-1 pl-px"><span class="border-r border-black">Изменить оформление</span></div>
  </article>
  <div class="pointer-events-none absolute top-[82px] left-[441px] h-[29px] w-[280px] rounded-md border-[3px] border-[#fb3f14]"></div>
</div>

<script>
  const NS = 'http://www.w3.org/2000/svg';
  const STEP = 8.43;
  function ruler(id, center, length, vertical) {
    const svg = document.getElementById(id);
    for (let i = -40; i <= 40; i++) {
      const p = center + i * STEP;
      if (p < 0 || p > length) continue;
      if (i % 4 === 0) {
        const t = document.createElementNS(NS, 'text');
        t.textContent = Math.abs(i / 2);
        t.setAttribute('text-anchor', 'middle');
        if (vertical) t.setAttribute('transform', `translate(11 ${p}) rotate(-90)`);
        else { t.setAttribute('x', p); t.setAttribute('y', 11); }
        svg.appendChild(t);
      } else {
        const r = document.createElementNS(NS, 'rect');
        const q = Math.round(p);
        r.setAttribute('x', vertical ? 4 : q);
        r.setAttribute('y', vertical ? q : 4);
        r.setAttribute('width', vertical ? 5 : 1);
        r.setAttribute('height', vertical ? 1 : 5);
        svg.appendChild(r);
      }
    }
  }
  ruler('hruler', 214, 432, false);
  ruler('vruler', 160, 322, true);
</script>
</body>
</html>
